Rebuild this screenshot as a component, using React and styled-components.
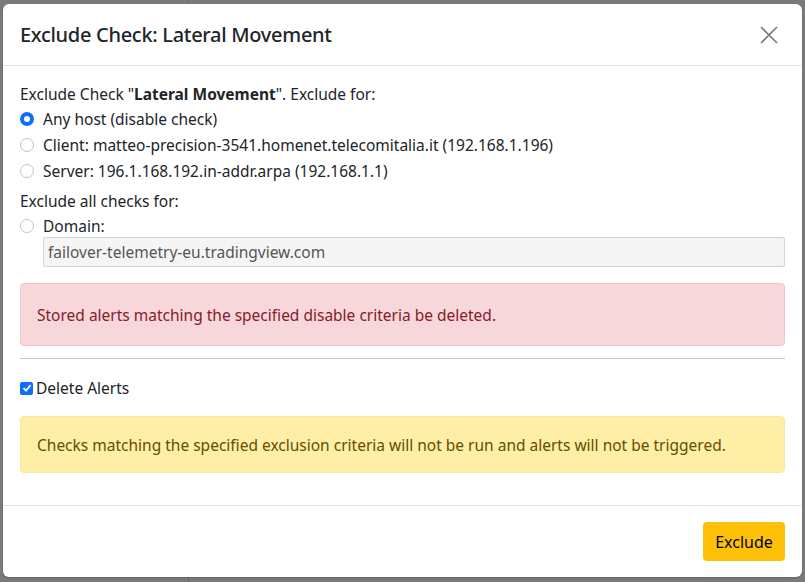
import React from "react";
import styled, { createGlobalStyle } from "styled-components";

const GlobalStyle = createGlobalStyle`
  html, body {
    margin: 0;
    padding: 0;
    background: #7a7a7a;
  }
  body {
    font-family: "Noto Sans", "Open Sans", sans-serif;
    font-size: 15.5px;
    color: #212529;
  }
`;

const Page = styled.div`
  position: relative;
  width: 805px;
  height: 582px;
  overflow: hidden;
  background: #7a7a7a;
`;

const SidePane = styled.div`
  width: 188px;
  height: 100%;
  border-right: 1px solid #6a6a6a;
`;

const Modal = styled.div`
  position: absolute;
  left: 3px;
  top: 4px;
  width: 799px;
  height: 573px;
  background: #fff;
  border-radius: 6px;
  display: flex;
  flex-direction: column;
  box-shadow: 0 1px 2px rgba(0, 0, 0, 0.2);
`;

const Header = styled.div`
  height: 62px;
  box-sizing: border-box;
  padding: 0 17px;
  display: flex;
  align-items: center;
  justify-content: space-between;
  border-bottom: 1px solid #dee2e6;
`;

const Title = styled.h5`
  margin: 0;
  font-size: 20px;
  font-weight: 500;
  letter-spacing: -0.3px;
`;

const Close = styled.button`
  width: 24px;
  height: 24px;
  padding: 0;
  border: 0;
  background: transparent;
  display: flex;
  align-items: center;
  justify-content: center;
  margin-right: 4px;
`;

const Body = styled.div`
  flex: 1;
  padding: 16px 17px 0;
  line-height: 24px;
`;

const Label = styled.div`
  margin-top: ${(p) => p.$top || 0}px;
`;

const Check = styled.label`
  display: flex;
  align-items: center;
  height: 26px;
  gap: 9px;
`;

const Radio = styled.span`
  width: 14px;
  height: 14px;
  box-sizing: border-box;
  border-radius: 50%;
  border: ${(p) => (p.$on ? "4px solid #0d6efd" : "1px solid #c4c4c4")};
  background: #fff;
  flex-shrink: 0;
`;

const Input = styled.div`
  margin: -2px 0 16px 23px;
  height: 30px;
  box-sizing: border-box;
  border: 1px solid #d4d4d4;
  border-radius: 2px;
  background: #f5f5f5;
  color: #555;
  padding: 0 4px;
  display: flex;
  align-items: center;
`;

const Alert = styled.div`
  border-radius: 4px;
  border: 1px solid ${(p) => (p.$kind === "danger" ? "#f5c2c7" : "#f7e7a4")};
  background: ${(p) => (p.$kind === "danger" ? "#f8d7da" : "#ffefa6")};
  color: ${(p) => (p.$kind === "danger" ? "#842029" : "#664d03")};
  padding: ${(p) => p.$pad || "15.5px"} 16px;
`;

const Rule = styled.hr`
  margin: 12px 0 17px;
  border: 0;
  border-top: 1px solid #c8c8c8;
`;

const CheckRow = styled.label`
  display: flex;
  align-items: center;
  gap: 3px;
  height: 24px;
  margin-bottom: 16px;
`;

const Box = styled.span`
  width: 13px;
  height: 13px;
  border-radius: 2px;
  background: #0d6efd;
  display: flex;
  align-items: center;
  justify-content: center;
`;

const Footer = styled.div`
  height: 72px;
  box-sizing: border-box;
  border-top: 1px solid #dee2e6;
  display: flex;
  align-items: center;
  justify-content: flex-end;
  padding: 0 17px;
`;

const Button = styled.button`
  height: 39px;
  width: 82px;
  border: 0;
  border-radius: 4px;
  background: #ffc107;
  color: #000;
  font: inherit;
  font-size: 16px;
`;

export default function App() {
  return (
    <>
      <GlobalStyle />
      <Page>
        <SidePane />
        <Modal>
          <Header>
            <Title>Exclude Check: Lateral Movement</Title>
            <Close aria-label="Close">
              <svg width="18" height="18" viewBox="0 0 18 18">
                <path d="M1 1L17 17M17 1L1 17" stroke="#7a7a7a" strokeWidth="1.6" />
              </svg>
            </Close>
          </Header>
          <Body>
            <Label>
              Exclude Check "<b>Lateral Movement</b>". Exclude for:
            </Label>
            <Check>
              <Radio $on />
              Any host (disable check)
            </Check>
            <Check>
              <Radio />
              Client: matteo-precision-3541.homenet.telecomitalia.it (192.168.1.196)
            </Check>
            <Check>
              <Radio />
              Server: 196.1.168.192.in-addr.arpa (192.168.1.1)
            </Check>
            <Label $top={5}>Exclude all checks for:</Label>
            <Check>
              <Radio />
              Domain:
            </Check>
            <Input>failover-telemetry-eu.tradingview.com</Input>
            <Alert $kind="danger" $pad="18.5px">
              Stored alerts matching the specified disable criteria be deleted.
            </Alert>
            <Rule />
            <CheckRow>
              <Box>
                <svg width="10" height="10" viewBox="0 0 10 10">
                  <path d="M1.5 5.2L4 7.6L8.6 2.2" stroke="#fff" strokeWidth="1.8" fill="none" />
                </svg>
              </Box>
              Delete Alerts
            </CheckRow>
            <Alert $kind="warning">
              Checks matching the specified exclusion criteria will not be run and alerts will not be triggered.
            </Alert>
          </Body>
          <Footer>
            <Button>Exclude</Button>
          </Footer>
        </Modal>
      </Page>
    </>
  );
}
